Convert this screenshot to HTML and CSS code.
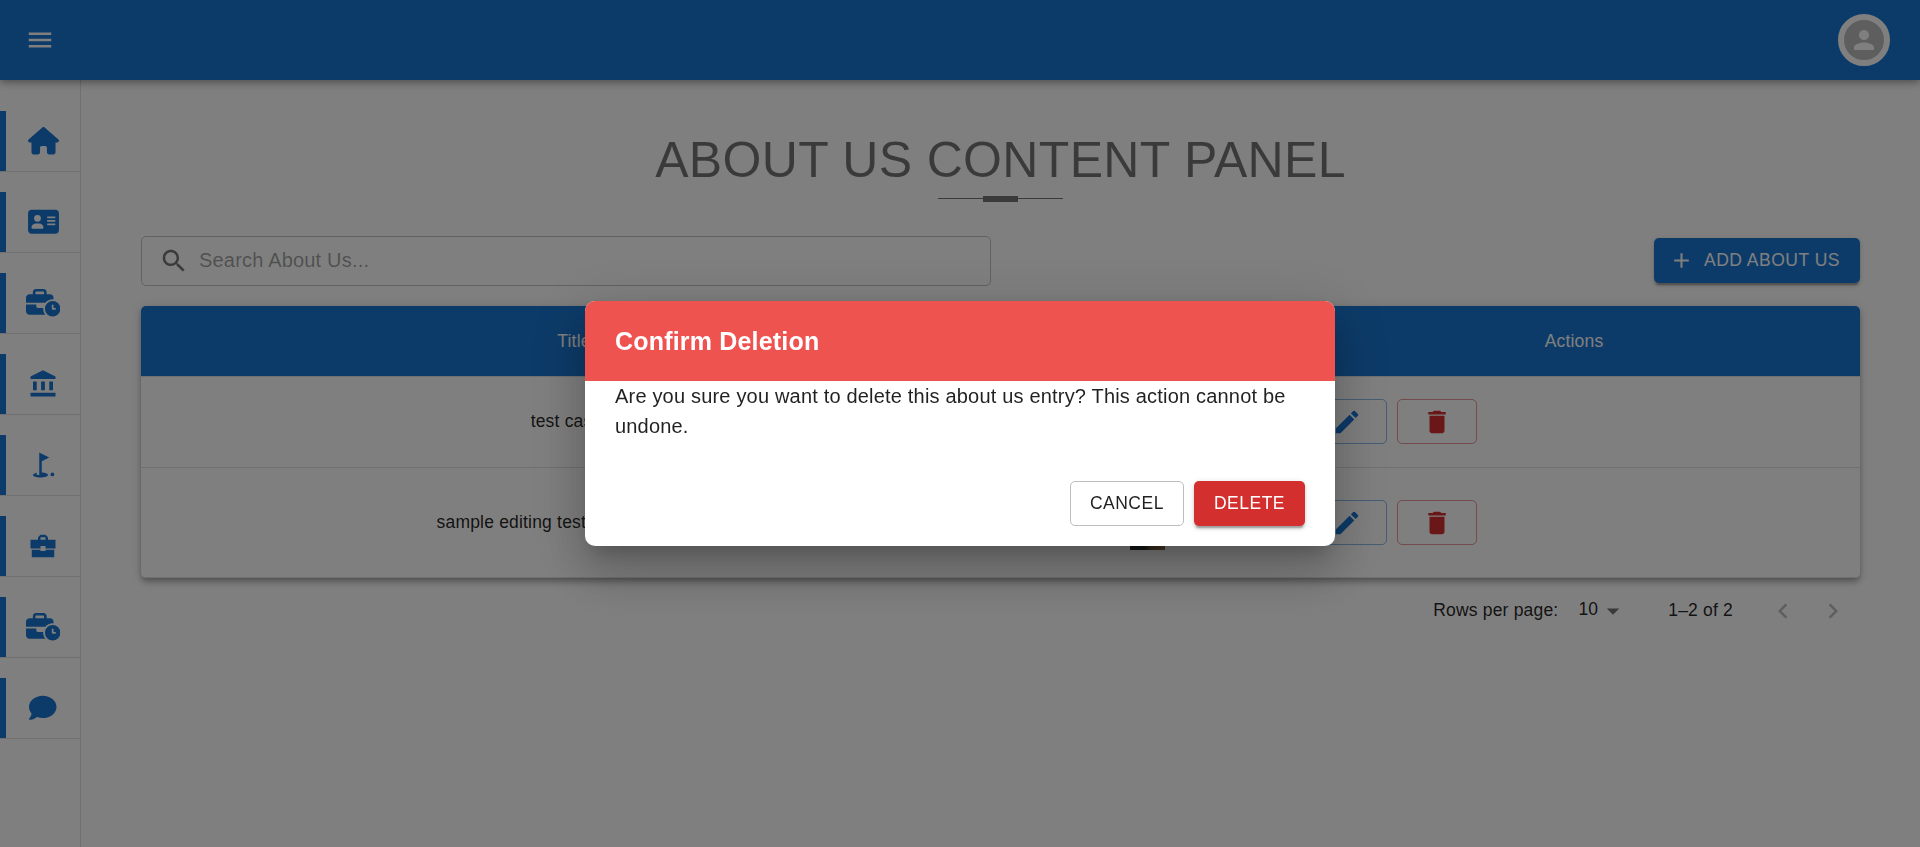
FILE: index.html
```html
<!DOCTYPE html>
<html lang="en">
<head>
<meta charset="utf-8">
<title>About Us Content Panel</title>
<link rel="stylesheet" href="styles.css">
</head>
<body>
<header class="appbar">
  <button class="icon-btn" aria-label="Menu"><svg class="icon" viewBox="0 0 24 24"><path d="M3 18h18v-2H3zm0-5h18v-2H3zm0-7v2h18V6z"/></svg></button>
  <div class="avatar"><svg class="icon" viewBox="0 0 24 24"><path d="M12 12c2.21 0 4-1.79 4-4s-1.79-4-4-4-4 1.79-4 4 1.79 4 4 4m0 2c-2.67 0-8 1.34-8 4v2h16v-2c0-2.66-5.33-4-8-4"/></svg></div>
</header>
<div class="shell">
  <nav class="sidebar">
    <a class="nav-item"><svg class="fa fa-wide" viewBox="0 0 576 512"><path d="M575.8 255.5c0 18-15 32.1-32 32.1h-32l.7 160.2c0 2.7-.2 5.4-.5 8.1V472c0 22.1-17.9 40-40 40H456c-1.1 0-2.2 0-3.3-.1c-1.4 .1-2.8 .1-4.2 .1H416 392c-22.1 0-40-17.9-40-40V448 384c0-17.7-14.3-32-32-32H256c-17.7 0-32 14.3-32 32v64 24c0 22.1-17.9 40-40 40H160 128.1c-1.5 0-3-.1-4.5-.2c-1.2 .1-2.4 .2-3.6 .2H104c-22.1 0-40-17.9-40-40V360c0-.9 0-1.9 .1-2.8V287.6H32c-18 0-32-14-32-32.1c0-9 3-17 10-24L266.4 8c7-7 15-8 22-8s15 2 21 7L564.8 231.5c8 7 12 15 11 24z"/></svg></a>
    <a class="nav-item"><svg class="fa fa-wide" viewBox="0 0 576 512"><path d="M64 32C28.7 32 0 60.7 0 96V416c0 35.3 28.7 64 64 64H512c35.3 0 64-28.7 64-64V96c0-35.3-28.7-64-64-64H64zm80 256h64c44.2 0 80 35.8 80 80c0 8.8-7.2 16-16 16H80c-8.8 0-16-7.2-16-16c0-44.2 35.8-80 80-80zm-32-96a64 64 0 1 1 128 0 64 64 0 1 1 -128 0zm256-32H496c8.8 0 16 7.2 16 16s-7.2 16-16 16H368c-8.8 0-16-7.2-16-16s7.2-16 16-16zm0 64H496c8.8 0 16 7.2 16 16s-7.2 16-16 16H368c-8.8 0-16-7.2-16-16s7.2-16 16-16zm0 64H496c8.8 0 16 7.2 16 16s-7.2 16-16 16H368c-8.8 0-16-7.2-16-16s7.2-16 16-16z"/></svg></a>
    <a class="nav-item"><svg class="fa fa-xwide" viewBox="0 0 640 512"><path d="M184 48H328c4.400 0 8 3.600 8 8V96H176V56c0-4.400 3.600-8 8-8zm-56 8V96H64C28.700 96 0 124.700 0 160v96H192 352h8.200c32.300-39.100 81.100-64 135.800-64c5.400 0 10.700 .2 16 .7V160c0-35.300-28.700-64-64-64H384V56c0-30.900-25.100-56-56-56H184c-30.900 0-56 25.100-56 56zM320 352H224c-17.700 0-32-14.300-32-32V288H0V416c0 35.300 28.700 64 64 64H360.200C335.100 449.600 320 410.500 320 368c0-5.400 .2-10.700 .7-16l-.7 0zm320 16a144 144 0 1 0 -288 0 144 144 0 1 0 288 0zM496 288c8.800 0 16 7.200 16 16v48h32c8.800 0 16 7.200 16 16s-7.200 16-16 16H496c-8.800 0-16-7.200-16-16V304c0-8.800 7.200-16 16-16z"/></svg></a>
    <a class="nav-item"><svg class="icon" viewBox="0 0 24 24"><path d="M4 10h3v7H4zm6.500 0h3v7h-3zM2 19h20v3H2zm15-9h3v7h-3zm-5-9L2 6v2h20V6z"/></svg></a>
    <a class="nav-item"><svg class="icon" viewBox="0 0 24 24"><circle cx="19.500" cy="19.500" r="1.500"/><path d="M17 5.920 9 2v18H7v-1.730c-1.790.350-3 .990-3 1.730 0 1.100 2.690 2 6 2s6-.900 6-2c0-.990-2.160-1.810-5-1.970V8.980z"/></svg></a>
    <a class="nav-item"><svg class="icon" viewBox="0 0 24 24"><path d="M10 16v-1H3v6h18v-6h-7v1zM22 7h-6V5l-2-2h-4L8 5v2H2v7h8v-2h4v2h8zm-8 0h-4V5h4z"/></svg></a>
    <a class="nav-item"><svg class="fa fa-xwide" viewBox="0 0 640 512"><path d="M184 48H328c4.400 0 8 3.600 8 8V96H176V56c0-4.400 3.600-8 8-8zm-56 8V96H64C28.700 96 0 124.700 0 160v96H192 352h8.200c32.300-39.100 81.100-64 135.800-64c5.400 0 10.700 .2 16 .7V160c0-35.300-28.700-64-64-64H384V56c0-30.900-25.100-56-56-56H184c-30.900 0-56 25.100-56 56zM320 352H224c-17.700 0-32-14.300-32-32V288H0V416c0 35.300 28.700 64 64 64H360.200C335.100 449.600 320 410.500 320 368c0-5.400 .2-10.700 .7-16l-.7 0zm320 16a144 144 0 1 0 -288 0 144 144 0 1 0 288 0zM496 288c8.800 0 16 7.200 16 16v48h32c8.800 0 16 7.200 16 16s-7.200 16-16 16H496c-8.800 0-16-7.200-16-16V304c0-8.800 7.200-16 16-16z"/></svg></a>
    <a class="nav-item"><svg class="fa" viewBox="0 0 512 512"><path d="M512 240c0 114.900-114.600 208-256 208c-37.100 0-72.300-6.400-104.100-17.900c-11.900 8.700-31.300 20.600-54.300 30.600C73.600 471.100 44.700 480 16 480c-6.500 0-12.300-3.900-14.800-9.900c-2.500-6-1.100-12.800 3.400-17.400l.3-.3c.3-.3 .7-.7 1.300-1.400c1.100-1.200 2.800-3.100 4.900-5.700c4.100-5 9.600-12.400 15.200-21.600c10-16.600 19.500-38.400 21.400-62.900C17.700 326.800 0 285.100 0 240C0 125.100 114.600 32 256 32s256 93.100 256 208z"/></svg></a>
  </nav>
  <main class="content">
    <h1 class="title">ABOUT US CONTENT PANEL</h1>
    <div class="divider"><span class="divider-block"></span></div>
    <div class="toolbar">
      <label class="search"><svg class="icon" viewBox="0 0 24 24"><path d="M15.500 14h-.790l-.280-.270C15.410 12.590 16 11.110 16 9.500 16 5.910 13.090 3 9.500 3S3 5.910 3 9.500 5.910 16 9.500 16c1.610 0 3.090-.590 4.230-1.570l.270.280v.790l5 4.990L20.490 19zm-6 0C7.010 14 5 11.990 5 9.500S7.010 5 9.500 5 14 7.010 14 9.500 11.990 14 9.500 14"/></svg><span class="placeholder">Search About Us...</span></label>
      <button class="btn btn-primary"><svg class="icon icon-sm" viewBox="0 0 24 24"><path d="M19 13h-6v6h-2v-6H5v-2h6V5h2v6h6z"/></svg>ADD ABOUT US</button>
    </div>
    <section class="table">
      <div class="row row-head"><div>Title</div><div>Image</div><div>Actions</div></div>
      <div class="row row-one">
        <div>test case 1</div><div></div>
        <div class="actions">
          <button class="btn btn-edit"><svg class="icon" viewBox="0 0 24 24"><path d="M3 17.250V21h3.750L17.810 9.940l-3.750-3.750zM20.710 7.040c.390-.390.390-1.020 0-1.410l-2.340-2.340a.996.996 0 0 0-1.410 0l-1.830 1.830 3.750 3.750z"/></svg></button>
          <button class="btn btn-remove"><svg class="icon" viewBox="0 0 24 24"><path d="M6 19c0 1.100.900 2 2 2h8c1.100 0 2-.900 2-2V7H6zM19 4h-3.500l-1-1h-5l-1 1H5v2h14z"/></svg></button>
        </div>
      </div>
      <div class="row row-two">
        <div>sample editing test cases about us</div><div><span class="thumb"></span></div>
        <div class="actions">
          <button class="btn btn-edit"><svg class="icon" viewBox="0 0 24 24"><path d="M3 17.250V21h3.750L17.810 9.940l-3.750-3.750zM20.710 7.040c.390-.390.390-1.020 0-1.410l-2.340-2.340a.996.996 0 0 0-1.410 0l-1.830 1.830 3.750 3.750z"/></svg></button>
          <button class="btn btn-remove"><svg class="icon" viewBox="0 0 24 24"><path d="M6 19c0 1.100.900 2 2 2h8c1.100 0 2-.900 2-2V7H6zM19 4h-3.500l-1-1h-5l-1 1H5v2h14z"/></svg></button>
        </div>
      </div>
    </section>
    <div class="pagination">
      <span>Rows per page:</span>
      <span class="select"><span class="select-value">10</span><svg class="icon" viewBox="0 0 24 24"><path d="m7 10 5 5 5-5z"/></svg></span>
      <span class="range">1–2 of 2</span>
      <button class="page-btn" aria-label="Previous"><svg class="icon" viewBox="0 0 24 24"><path d="M15.410 16.590 10.830 12l4.580-4.590L14 6l-6 6 6 6z"/></svg></button>
      <button class="page-btn" aria-label="Next"><svg class="icon" viewBox="0 0 24 24"><path d="M8.590 16.590 13.170 12 8.590 7.410 10 6l6 6-6 6z"/></svg></button>
    </div>
  </main>
</div>
<div class="backdrop">
  <div class="dialog" role="dialog">
    <h2 class="dialog-title">Confirm Deletion</h2>
    <p class="dialog-text">Are you sure you want to delete this about us entry? This action cannot be undone.</p>
    <div class="dialog-actions">
      <button class="btn btn-cancel">CANCEL</button>
      <button class="btn btn-delete">DELETE</button>
    </div>
  </div>
</div>
</body>
</html>
```

FILE: styles.css
```css
* { box-sizing: border-box; }

body {
  margin: 0;
  height: 847px;
  overflow: hidden;
  background: #fff;
  color: rgba(0, 0, 0, .87);
  font: 17.5px/1.43 "Liberation Sans", Arial, sans-serif;
  letter-spacing: .01071em;
}

button {
  margin: 0;
  padding: 0;
  border: 0;
  background: none;
  color: inherit;
  font: inherit;
}

.icon {
  display: block;
  flex: none;
  width: 30px;
  height: 30px;
  fill: currentColor;
}

.icon-sm { width: 25px; height: 25px; }

.appbar {
  position: relative;
  z-index: 1;
  display: flex;
  align-items: center;
  justify-content: space-between;
  height: 80px;
  padding: 0 30px 0 25px;
  background: #1976d2;
  color: #fff;
  box-shadow: 0 2.5px 5px -1.25px rgba(0, 0, 0, .2), 0 5px 6.25px rgba(0, 0, 0, .14), 0 1.25px 12.5px rgba(0, 0, 0, .12);
}

.avatar {
  display: flex;
  align-items: center;
  justify-content: center;
  width: 52px;
  height: 52px;
  border: 6px solid #fff;
  border-radius: 50%;
  background: #bdbdbd;
}

.shell { display: flex; height: 767px; }

.sidebar {
  display: flex;
  flex-direction: column;
  flex: none;
  gap: 20px;
  width: 81px;
  padding-top: 31px;
  border-right: 1px solid #e0e0e0;
}

.nav-item {
  display: flex;
  align-items: center;
  justify-content: center;
  height: 61px;
  border-bottom: 1px solid #e0e0e0;
  background: linear-gradient(#1976d2, #1976d2) 0 0 / 6px 60px no-repeat;
  padding-left: 6px;
  color: #1976d2;
}

.fa {
  width: 27.5px;
  height: 27.5px;
  fill: currentColor;
}

.fa-wide { width: 31px; }
.fa-xwide { width: 34.4px; }

.content {
  flex: 1;
  padding: 44px 60px 0;
}

.title {
  margin: 0;
  color: rgba(0, 0, 0, .54);
  font-size: 50px;
  font-weight: 400;
  line-height: 72px;
  letter-spacing: .33px;
  text-align: center;
}

.divider {
  display: flex;
  align-items: center;
  justify-content: center;
  width: 125px;
  height: 6px;
  margin: 0 auto;
  background: linear-gradient(#757575, #757575) 0 2px / 100% 1px no-repeat;
}

.divider-block {
  width: 35px;
  height: 6px;
  background: #757575;
}

.toolbar {
  display: flex;
  align-items: center;
  justify-content: space-between;
  margin-top: 34px;
}

.search {
  display: flex;
  align-items: center;
  gap: 10px;
  width: 850px;
  height: 50px;
  padding: 0 17px;
  border: 1px solid #c4c4c4;
  border-radius: 5px;
  color: rgba(0, 0, 0, .54);
  font-size: 20px;
  letter-spacing: .00938em;
}

.placeholder {
  padding-bottom: 2px;
  color: rgba(0, 0, 0, .38);
}

.btn {
  display: flex;
  align-items: center;
  justify-content: center;
  height: 45px;
  padding: 0 20px;
  border-radius: 5px;
  font-size: 17.5px;
  letter-spacing: .02857em;
}

.btn-primary {
  gap: 10px;
  margin-bottom: 1px;
  padding-left: 15px;
  background: #1976d2;
  color: #fff;
  box-shadow: 0 3.75px 1.25px -2.5px rgba(0, 0, 0, .2), 0 2.5px 2.5px rgba(0, 0, 0, .14), 0 1.25px 6.25px rgba(0, 0, 0, .12);
}

.table {
  margin-top: 20px;
  border-radius: 5px;
  box-shadow: 0 2.5px 5px -1.25px rgba(0, 0, 0, .2), 0 5px 6.25px rgba(0, 0, 0, .14), 0 1.25px 12.5px rgba(0, 0, 0, .12);
  overflow: hidden;
}

.row {
  display: grid;
  grid-template-columns: 866px 281px 1fr;
  align-items: center;
  border-bottom: 1px solid #e0e0e0;
  text-align: center;
}

.row-head {
  height: 71px;
  padding-top: 1px;
  background: linear-gradient(#1976d2, #1976d2);
  background-clip: padding-box;
  color: #fff;
}

.row-one { height: 91px; }
.row-two { height: 110px; }

.actions {
  display: flex;
  gap: 10px;
  padding-left: 19px;
}

.row-one .actions { padding-bottom: 1px; }

.btn-edit, .btn-remove { width: 80px; }

.btn-edit {
  border: 1px solid rgba(25, 118, 210, .5);
  color: #1976d2;
}

.btn-remove {
  border: 1px solid rgba(211, 47, 47, .5);
  color: #d32f2f;
}

.thumb {
  display: block;
  width: 35px;
  height: 62px;
  margin: 0 auto 7px;
  background: linear-gradient(90deg, #27302f 0 40%, #6b543c 60%, #8a6a48);
}

.pagination {
  display: flex;
  align-items: center;
  justify-content: flex-end;
  height: 65px;
  padding-right: 2px;
}

.select {
  display: flex;
  align-items: center;
  margin: 0 40px 0 20px;
}

.select .icon { color: rgba(0, 0, 0, .54); }
.select-value { padding-bottom: 2px; }
.range { margin-right: 25px; }

.page-btn {
  padding: 10px;
  color: rgba(0, 0, 0, .26);
}

.backdrop {
  position: fixed;
  inset: 0;
  z-index: 2;
  display: flex;
  align-items: center;
  justify-content: center;
  background: rgba(0, 0, 0, .5);
}

.dialog {
  width: 750px;
  border-radius: 10px;
  background: #fff;
  box-shadow: 0 13.75px 18.75px -8.75px rgba(0, 0, 0, .2), 0 30px 47.5px 3.75px rgba(0, 0, 0, .14), 0 11.25px 57.5px 10px rgba(0, 0, 0, .12);
  overflow: hidden;
}

.dialog-title {
  margin: 0;
  padding: 20px 30px;
  background: #ef5350;
  color: #fff;
  font-size: 25px;
  font-weight: 700;
  line-height: 40px;
  letter-spacing: .0075em;
}

.dialog-text {
  margin: 0;
  padding: 0 30px 20px;
  font-size: 20px;
  line-height: 30px;
  letter-spacing: .00938em;
}

.dialog-actions {
  display: flex;
  justify-content: flex-end;
  gap: 10px;
  padding: 20px 30px;
}

.btn-cancel {
  width: 114px;
  padding: 0;
  border: 1px solid #bdbdbd;
}

.btn-delete {
  background: #d32f2f;
  color: #fff;
  box-shadow: 0 3.75px 1.25px -2.5px rgba(0, 0, 0, .2), 0 2.5px 2.5px rgba(0, 0, 0, .14), 0 1.25px 6.25px rgba(0, 0, 0, .12);
}
```
